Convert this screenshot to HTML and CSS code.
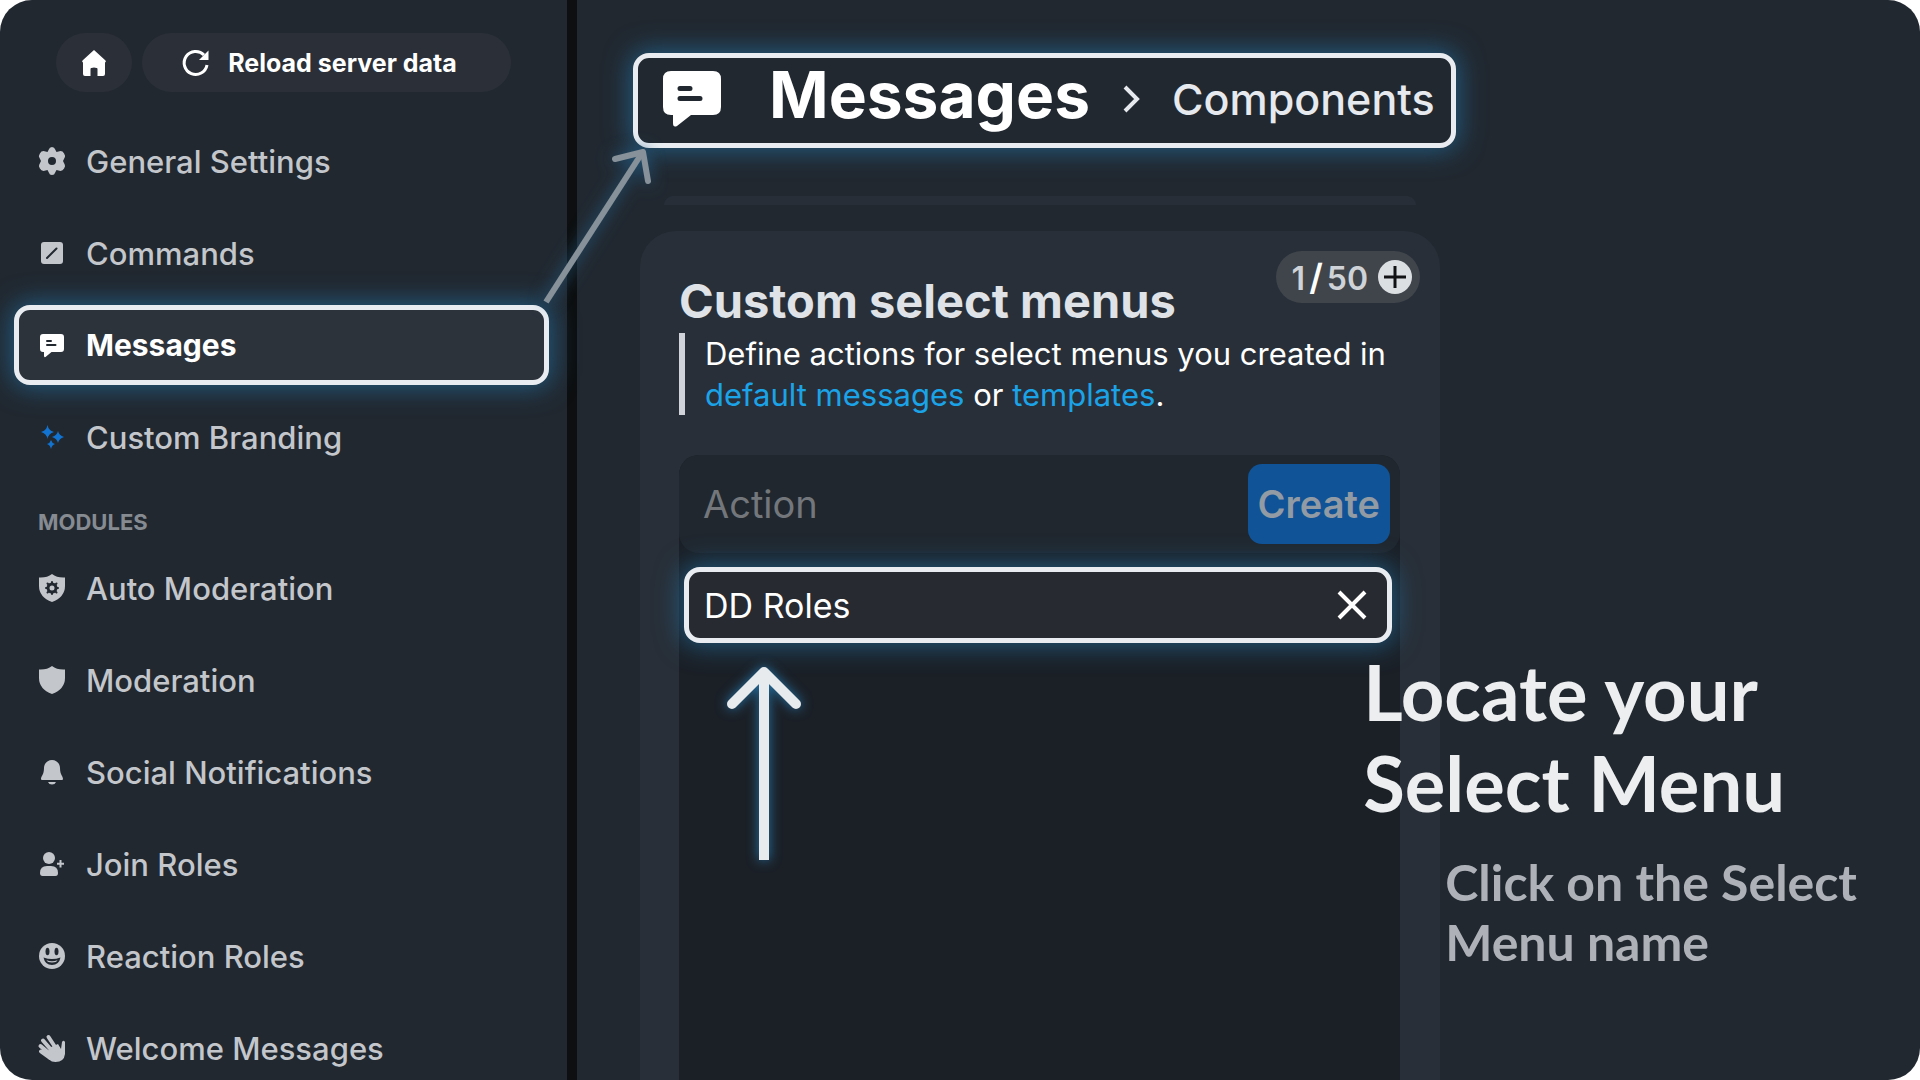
FILE: index.html
```html
<!DOCTYPE html>
<html lang="en">
<head>
  <meta charset="UTF-8">
  <meta name="viewport" content="width=device-width, initial-scale=1.0">
  <title>Messages - Components</title>
  <link rel="stylesheet" href="styles.css">
</head>
<body>

<div class="window">

  <!-- Sidebar -->
  <aside class="sidebar">
    <div class="top-bar">
      <button class="pill home-btn" aria-label="Home">
        <svg class="icon" viewBox="0 0 28 28"><path d="M14 1 L25.500 11.500 Q26.500 13 25 13.500 V25 Q25 27 23 27 H17.500 V20 Q17.500 18.500 14 18.500 Q10.500 18.500 10.500 20 V27 H5 Q3 27 3 25 V13.500 Q1.500 13 2.500 11.500 Z"/></svg>
      </button>
      <button class="pill reload-btn">
        <svg class="icon" viewBox="0 0 28 28"><path class="line" d="M25 16 A11.500 11.500 0 1 1 22 6"/><path d="M26.500 1.500 V11 H17 Z"/></svg>
        Reload server data
      </button>
    </div>

    <nav class="menu">
      <a class="menu-item" href="#">
        <svg class="icon" viewBox="0 0 28 28"><path fill-rule="evenodd" d="M14 0 Q16.500 0 17.200 2.500 L18.500 5 L21.500 4.200 Q24.500 3.600 26.100 6.500 Q27.700 9 26.700 10.500 L25 14 L26.700 17.500 Q27.700 19 26.100 21.500 Q24.500 24.400 21.500 23.800 L18.500 23 L17.200 25.500 Q16.500 28 14 28 Q11.500 28 10.800 25.500 L9.500 23 L6.500 23.800 Q3.500 24.400 1.900 21.500 Q0.300 19 1.300 17.500 L3 14 L1.300 10.500 Q0.300 9 1.900 6.500 Q3.500 3.600 6.500 4.200 L9.500 5 L10.800 2.500 Q11.500 0 14 0 Z M14 10 A4 4 0 1 0 14 18 A4 4 0 1 0 14 10 Z"/></svg>
        General Settings
      </a>
      <a class="menu-item" href="#">
        <svg class="icon" viewBox="0 0 28 28"><rect x="3" y="3" width="22" height="22" rx="3"/><path class="cut" d="M9 19 L18.500 9.500"/></svg>
        Commands
      </a>
      <a class="menu-item highlight active" href="#">
        <svg class="icon" viewBox="0 0 28 28"><path d="M5 3 H23 Q26 3 26 6 V18 Q26 21 23 21 H13.500 L7.500 26 Q6 26.500 6 25 V21 H5 Q2 21 2 18 V6 Q2 3 5 3 Z"/><path class="cut" d="M9 10 H13 M9 14 H17.500"/></svg>
        Messages
      </a>
      <a class="menu-item" href="#">
        <svg class="icon sparkle" viewBox="0 0 28 28"><path d="M9.500 2 Q10.500 7.500 16 9 Q10.500 10.500 9.500 16 Q8.500 10.500 3 9 Q8.500 7.500 9.500 2 Z M20 8 Q21 12.500 26 14 Q21 15.500 20 20 Q19 15.500 14 14 Q19 12.500 20 8 Z M13 17 Q13.800 20 17 21 Q13.800 22 13 26 Q12.200 22 9 21 Q12.200 20 13 17 Z"/></svg>
        Custom Branding
      </a>
    </nav>

    <h2 class="menu-title">MODULES</h2>

    <nav class="menu">
      <a class="menu-item" href="#">
        <svg class="icon" viewBox="0 0 28 28"><path d="M14 0 Q19 4 27 3.500 V12 Q27 23 14 28 Q1 23 1 12 V3.500 Q9 4 14 0 Z"/><circle class="cut gear" cx="14" cy="14" r="4"/><path class="cut" d="M14 8 V9 M14 19 V20 M8 14 H9 M19 14 H20 M9.500 9.500 L10.500 10.500 M17.500 17.500 L18.500 18.500 M18.500 9.500 L17.500 10.500 M10.500 17.500 L9.500 18.500"/></svg>
        Auto Moderation
      </a>
      <a class="menu-item" href="#">
        <svg class="icon" viewBox="0 0 28 28"><path d="M14 0 Q19 4 27 3.500 V12 Q27 23 14 28 Q1 23 1 12 V3.500 Q9 4 14 0 Z"/></svg>
        Moderation
      </a>
      <a class="menu-item" href="#">
        <svg class="icon" viewBox="0 0 28 28"><path d="M14 2 C19 2 22 6 22 10 C22 17 25 18 25 21 Q25 22 24 22 H4 Q3 22 3 21 C3 18 6 17 6 10 C6 6 9 2 14 2 Z M10 24 H18 Q17 26.500 14 26.500 Q11 26.500 10 24 Z"/></svg>
        Social Notifications
      </a>
      <a class="menu-item" href="#">
        <svg class="icon" viewBox="0 0 28 28"><circle cx="11" cy="8" r="6"/><path d="M9 16 H13 Q20 16 20 23 Q20 26 17.500 26 H4.500 Q2 26 2 23 Q2 16 9 16 Z"/><path class="line thin" d="M22.500 10 V17.500 M19 13.700 H26"/></svg>
        Join Roles
      </a>
      <a class="menu-item" href="#">
        <svg class="icon" viewBox="0 0 28 28"><circle cx="14" cy="14" r="13"/><g class="hole"><ellipse cx="9.500" cy="9.500" rx="2" ry="3.800"/><ellipse cx="18.500" cy="9.500" rx="2" ry="3.800"/><path d="M5.500 15.500 Q14 18.500 22.500 15.500 Q21 23 14 23 Q7 23 5.500 15.500 Z"/></g><path d="M8.500 18.300 Q14 20 19.500 18.300 Q18.500 20.500 14 20.500 Q9.500 20.500 8.500 18.300 Z"/></svg>
        Reaction Roles
      </a>
      <a class="menu-item" href="#">
        <svg class="icon" viewBox="0 0 28 28"><path d="M13 13 L20 10 L23 15 L24 8 Q25.500 5.500 27 8 V20 Q26 28 17.500 28 Q13.500 28 11 25.500 L7 21 Z"/><path class="finger" d="M12 24 L3 17.500 M12 20 L2.500 12 M15 18 L5 6.500 M19 16 L10.500 3"/></svg>
        Welcome Messages
      </a>
    </nav>
  </aside>

  <!-- Main area -->
  <main class="main">
    <header class="crumbs highlight">
      <svg class="crumb-icon" viewBox="0 0 58 56"><path d="M8 0 H50 Q58 0 58 8 V36 Q58 44 50 44 H28 L14 55 Q10 57 10 52 V44 H8 Q0 44 0 36 V8 Q0 0 8 0 Z"/><path class="cut" d="M17 17.500 H27 M17 27.500 H37"/></svg>
      <h1>Messages</h1>
      <svg class="chevron" viewBox="0 0 18 30"><path d="M3 3 L15 15 L3 27"/></svg>
      <span class="crumb-page">Components</span>
    </header>

    <div class="previous-card"></div>

    <section class="card">
      <div class="card-head">
        <h2>Custom select menus</h2>
        <div class="counter">
          <span>1<b>/</b>50</span>
          <button class="add-btn" aria-label="Add select menu">
            <svg viewBox="0 0 34 34"><path d="M17 6 V28 M6 17 H28"/></svg>
          </button>
        </div>
      </div>
      <p class="hint">Define actions for select menus you created in <br><a href="#">default messages</a> or <a href="#">templates</a>.</p>

      <div class="action-box">
        <div class="action-form">
          <input type="text" placeholder="Action" aria-label="Action">
          <button class="create-btn">Create</button>
        </div>
        <div class="action-row highlight">
          <span>DD Roles</span>
          <button class="remove-btn" aria-label="Remove DD Roles">
            <svg viewBox="0 0 30 30"><path d="M2 2 L28 28 M28 2 L2 28"/></svg>
          </button>
        </div>
        <svg class="arrow-up" viewBox="0 0 74 193"><path d="M37 193 V7"/><path class="head" d="M5 37 L37 5 L69 37"/></svg>
      </div>
    </section>
  </main>

  <!-- Guide notes on top of the page -->
  <svg class="arrow-link" viewBox="0 0 120 170"><path d="M17 161 L113 12"/><path class="head" d="M86 18 L114 11 L119 40"/></svg>

  <div class="note">
    <p class="note-title">Locate your<br>Select Menu</p>
    <p class="note-text">Click on the Select<br>Menu name</p>
  </div>
</div>

</body>
</html>
```
FILE: styles.css
```css
/* General Styling */
* {
  box-sizing: border-box;
}

body {
  margin: 0;
  background-color: #ffffff;
  font-family: Inter, "Noto Sans", sans-serif;
  color: #ffffff;
}

h1, h2, p {
  margin: 0;
}

a {
  text-decoration: none;
}

button {
  border: none;
  padding: 0;
  font-family: inherit;
  color: inherit;
  cursor: pointer;
}

svg {
  display: block;
  flex: none;
  overflow: visible;
  fill: currentColor;
}

.window {
  position: relative;
  display: flex;
  height: 100vh;
  overflow: hidden;
  border-radius: 32px;
  background-color: #212830;
  white-space: nowrap;
}

.highlight {
  border: 5px solid #e9edf2;
  border-radius: 16px;
  box-shadow: 0 0 26px 3px rgba(36, 116, 168, 0.65);
}

/* Sidebar */
.sidebar {
  width: calc(30% + 1px);
  flex: none;
  padding: 33px 18px 0 14px;
  border-right: 10px solid #0d0f10;
}

.top-bar {
  display: flex;
  gap: 10px;
  margin: 0 38px 29px 42px;
}

.pill {
  display: flex;
  align-items: center;
  justify-content: center;
  gap: 18px;
  height: 59px;
  border-radius: 30px;
  background-color: #2b3038;
  font-size: 25px;
  font-weight: 700;
}

.home-btn {
  width: 76px;
}

.reload-btn {
  flex: 1;
  padding-right: 14px;
}

.menu {
  display: flex;
  flex-direction: column;
  gap: 12px;
}

.menu-item {
  display: flex;
  align-items: center;
  gap: 20px;
  height: 80px;
  padding-left: 24px;
  color: #c3c6cb;
  font-size: 31px;
  font-weight: 500;
}

.menu-item.active {
  padding-left: 19px;
  background-color: #2d333b;
  color: #ffffff;
  font-size: 30px;
  font-weight: 700;
}

.menu-title {
  margin: 31px 24px 12px;
  color: #868b92;
  font-size: 22px;
  line-height: 28px;
  font-weight: 700;
}

/* Icons */
.icon {
  width: 28px;
  height: 28px;
}

.icon .line {
  fill: none;
  stroke: currentColor;
  stroke-width: 3;
}

.icon .thin {
  stroke-width: 2;
}

.icon .cut {
  fill: none;
  stroke: #212830;
  stroke-width: 2;
  stroke-linecap: round;
}

.icon .gear {
  stroke-width: 3;
}

.icon .hole {
  fill: #212830;
}

.icon .finger {
  fill: none;
  stroke: currentColor;
  stroke-width: 4;
  stroke-linecap: round;
}

.sparkle {
  color: #1373d1;
}

/* Main area */
.main {
  flex: 1;
  display: flex;
  flex-direction: column;
  align-items: flex-start;
  padding: 53px 63px 0;
}

.crumbs {
  display: flex;
  align-items: center;
  height: 95px;
  margin-left: -7px;
  padding: 0 16px 4px 25px;
}

.crumb-icon {
  width: 58px;
  height: 56px;
  margin-right: 48px;
}

.crumb-icon .cut {
  fill: none;
  stroke: #212830;
  stroke-width: 5;
  stroke-linecap: round;
}

.crumbs h1 {
  font-size: 64px;
  line-height: 80px;
  padding-bottom: 8px;
}

.chevron {
  width: 18px;
  height: 30px;
  margin: 0 32px;
  fill: none;
  stroke: #e6e9ed;
  stroke-width: 4;
}

.crumb-page {
  color: #e6e9ed;
  font-size: 43px;
  font-weight: 500;
}

.previous-card {
  width: 100%;
  max-width: 752px;
  height: 9px;
  margin: 48px 24px 26px;
  border-radius: 24px 24px 0 0;
  background-color: #272e37;
}

.card {
  display: flex;
  flex-direction: column;
  flex: 1;
  width: 100%;
  max-width: 800px;
  padding: 20px 40px 0 39px;
  border-radius: 36px 36px 0 0;
  background-color: #282f38;
}

.card-head {
  display: flex;
  justify-content: space-between;
  align-items: flex-start;
  margin-right: -20px;
}

.card-head h2 {
  padding-top: 20px;
  color: #dfe2e6;
  font-size: 47px;
  line-height: 60px;
}

.counter {
  display: flex;
  align-items: center;
  gap: 10px;
  height: 52px;
  padding: 0 8px 0 16px;
  border-radius: 26px;
  background-color: #40454c;
  color: #cfd2d6;
  font-size: 32px;
  font-weight: 600;
}

.counter b {
  margin: 0 4px;
  color: #ffffff;
  font-size: 36px;
  font-weight: 600;
}

.add-btn {
  width: 34px;
  height: 34px;
  border-radius: 50%;
  background-color: #dcdfe2;
}

.add-btn svg {
  stroke: #101214;
  stroke-width: 3;
}

.hint {
  margin-top: 2px;
  padding-left: 20px;
  border-left: 6px solid #d0d3d9;
  font-size: 31px;
  line-height: 41px;
}

.hint a {
  color: #1ba3e8;
}

.action-box {
  position: relative;
  flex: 1;
  margin-top: 40px;
  border-radius: 20px 20px 0 0;
  background-color: #1b2027;
}

.action-form {
  display: flex;
  align-items: center;
  height: 98px;
  padding: 0 10px 0 24px;
  border-radius: 20px;
  background-color: #20272f;
}

.action-form input {
  flex: 1;
  min-width: 0;
  padding: 0;
  border: none;
  outline: none;
  background: none;
  color: #ffffff;
  font-family: inherit;
  font-size: 38px;
}

.action-form input::placeholder {
  color: #73777c;
}

.create-btn {
  height: 80px;
  padding: 0 10px;
  border-radius: 14px;
  background-color: #105397;
  color: #929aa4;
  font-size: 38px;
  font-weight: 600;
}

.action-row {
  display: flex;
  align-items: center;
  justify-content: space-between;
  height: 76px;
  margin: 14px 8px 0 5px;
  padding: 0 20px 0 15px;
  background-color: #272a31;
  font-size: 34px;
}

.remove-btn {
  background: none;
}

.remove-btn svg {
  width: 30px;
  height: 30px;
  stroke: #ffffff;
  stroke-width: 4;
}

/* Guide arrows and notes */
.arrow-up {
  position: absolute;
  top: 212px;
  left: 48px;
  width: 74px;
  height: 193px;
  fill: none;
  stroke: #e7ebed;
  stroke-width: 10;
  filter: drop-shadow(0 0 6px #2474a8);
}

.head {
  stroke-linecap: round;
  stroke-linejoin: round;
}

.arrow-link {
  position: absolute;
  top: 141px;
  left: 529px;
  width: 120px;
  height: 170px;
  fill: none;
  stroke: #87919a;
  stroke-width: 6;
  filter: drop-shadow(0 0 8px #24608a);
}

.note {
  position: absolute;
  top: 646px;
  left: 71%;
  font-family: Lato, sans-serif;
  font-weight: 700;
}

.note-title {
  color: #eceeef;
  font-size: 76px;
  line-height: 91px;
}

.note-text {
  margin: 24px 0 0 82px;
  color: #aeb2b8;
  font-size: 50px;
  line-height: 60px;
}
```
